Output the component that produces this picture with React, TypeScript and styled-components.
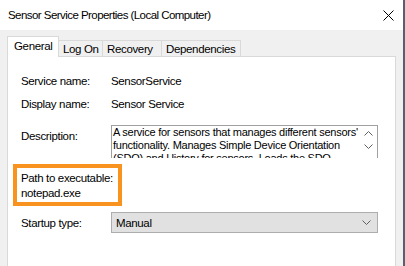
import styled, { createGlobalStyle } from "styled-components";

const Global = createGlobalStyle`
  html, body { margin: 0; padding: 0; background: #ffffff; overflow: hidden; }
  body {
    font-family: "Liberation Sans", Arial, sans-serif;
    font-size: 11.5px;
    letter-spacing: -0.35px;
    color: #000;
  }
`

const Window = styled.div`
  width: 403px;
  height: 266px;
  border-right: 2px solid #58606c;
  display: flex;
  flex-direction: column;
  background: #f0f0f0;
`

const TitleBar = styled.div`
  height: 30px;
  background: #ffffff;
  display: flex;
  align-items: center;
  justify-content: space-between;
  padding-left: 8px;
  padding-right: 9px;
  box-sizing: border-box;
  letter-spacing: -0.55px;
`

const Body = styled.div`
  flex: 1;
  padding: 7px 7px 0 7px;
  display: flex;
  flex-direction: column;
`

const TabRow = styled.div`
  display: flex;
  align-items: flex-end;
  height: 20px;
  position: relative;
  z-index: 1;
`

const Tab = styled.div<{ $active?: boolean; $w: number }>`
  width: ${p => p.$w}px;
  height: ${p => (p.$active ? 21 : 17)}px;
  box-sizing: border-box;
  border: 1px solid #d9d9d9;
  border-left: ${p => (p.$active ? "1px solid #d9d9d9" : "none")};
  border-bottom: ${p => (p.$active ? "none" : "1px solid #d9d9d9")};
  background: ${p => (p.$active ? "#ffffff" : "#f0f0f0")};
  display: flex;
  align-items: center;
  padding-left: ${p => (p.$active ? 6 : 4)}px;
  padding-bottom: ${p => (p.$active ? 3 : 0)}px;
  white-space: nowrap;
  overflow: hidden;
`

const Panel = styled.div`
  flex: 1;
  background: #ffffff;
  border: 1px solid #d9d9d9;
  border-bottom: none;
  margin-top: -1px;
  padding: 16px 0 0 13px;
  width: 389px;
  box-sizing: border-box;
`

const Row = styled.div<{ $top?: number }>`
  display: flex;
  align-items: center;
  margin-top: ${p => p.$top ?? 0}px;
  line-height: 16px;
`

const Label = styled.div`
  width: 90px;
  flex: none;
`

const Value = styled.div``

const DescRow = styled.div`
  display: flex;
  align-items: flex-start;
  margin-top: 13px;
`

const DescLabel = styled(Label)`
  padding-top: 3px;
  line-height: 16px;
`

const TextBox = styled.div`
  width: 267px;
  height: 33px;
  box-sizing: border-box;
  border: 1px solid #a0a0a0;
  border-bottom: none;
  display: flex;
  overflow: hidden;
`

const DescText = styled.div`
  flex: 1;
  padding: 0 0 0 1px;
  font-size: 11px;
  line-height: 13px;
  letter-spacing: -0.25px;
`

const Scroll = styled.div`
  width: 17px;
  flex: none;
  display: flex;
  flex-direction: column;
  align-items: center;
  padding-top: 5px;
  gap: 8px;
`

const Highlight = styled.div`
  margin: 6px 0 0 -8px;
  width: 109px;
  height: 42px;
  box-sizing: border-box;
  border: 4px solid #f7931e;
  padding: 3px 0 0 4px;
  line-height: 15px;
  white-space: nowrap;
`

const SelectBox = styled.div`
  width: 267px;
  height: 21px;
  box-sizing: border-box;
  border: 1px solid #adadad;
  background: #e1e1e1;
  display: flex;
  align-items: center;
  justify-content: space-between;
  padding: 0 6px 0 4px;
`

function Chevron({ up }: { up?: boolean }) {
  return (
    <svg width="9" height="5" viewBox="0 0 9 5">
      <polyline
        points={up ? "0.5,4.5 4.5,0.5 8.5,4.5" : "0.5,0.5 4.5,4.5 8.5,0.5"}
        fill="none"
        stroke="#606060"
        strokeWidth="1"
      />
    </svg>
  )
}

const tabs = [
  { name: "General", w: 52, active: true },
  { name: "Log On", w: 44 },
  { name: "Recovery", w: 59 },
  { name: "Dependencies", w: 79 },
]

export default function App() {
  return (
    <Window>
      <Global />
      <TitleBar>
        <span>Sensor Service Properties (Local Computer)</span>
        <svg width="11" height="11" viewBox="0 0 11 11">
          <path d="M0.5 0.5 L10.5 10.5 M10.5 0.5 L0.5 10.5" stroke="#000" strokeWidth="1" />
        </svg>
      </TitleBar>
      <Body>
        <TabRow>
          {tabs.map(t => (
            <Tab key={t.name} $w={t.w} $active={t.active}>{t.name}</Tab>
          ))}
        </TabRow>
        <Panel>
          <Row>
            <Label>Service name:</Label>
            <Value>SensorService</Value>
          </Row>
          <Row $top={7}>
            <Label>Display name:</Label>
            <Value>Sensor Service</Value>
          </Row>
          <DescRow>
            <DescLabel>Description:</DescLabel>
            <TextBox>
              <DescText>
                A service for sensors that manages different sensors'
                functionality. Manages Simple Device Orientation
                (SDO) and History for sensors. Loads the SDO
              </DescText>
              <Scroll>
                <Chevron up />
                <Chevron />
              </Scroll>
            </TextBox>
          </DescRow>
          <Highlight>
            <div>Path to executable:</div>
            <div>notepad.exe</div>
          </Highlight>
          <Row $top={6}>
            <Label>Startup type:</Label>
            <SelectBox>
              <span>Manual</span>
              <Chevron />
            </SelectBox>
          </Row>
        </Panel>
      </Body>
    </Window>
  )
}
